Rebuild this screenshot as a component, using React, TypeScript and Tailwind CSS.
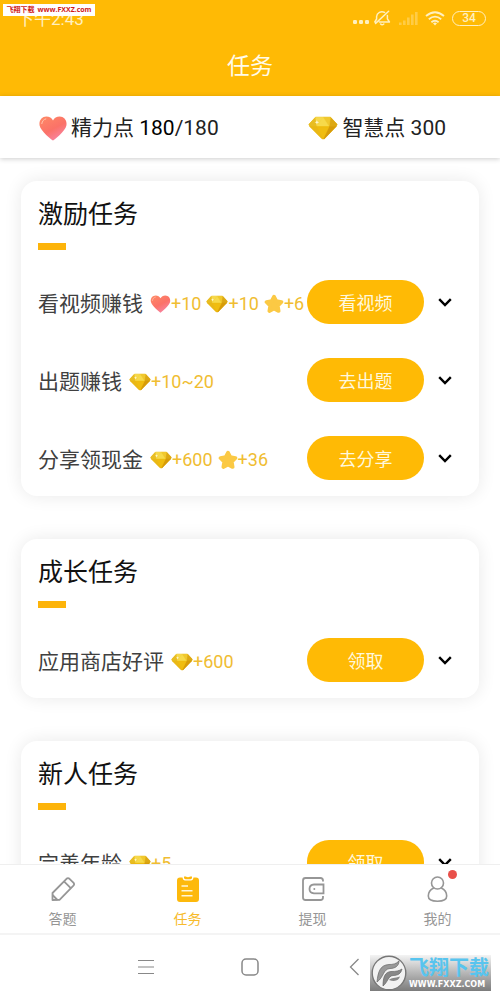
import { useState } from 'react';
import type { ReactNode } from 'react';

type RewardKind = 'heart' | 'gem' | 'star';

interface Task {
  name: string;
  action: string;
  rewards: { kind: RewardKind; amount: string }[];
}

interface TaskGroup {
  title: string;
  tasks: Task[];
}

const groups: TaskGroup[] = [
  {
    title: '激励任务',
    tasks: [
      {
        name: '看视频赚钱',
        action: '看视频',
        rewards: [
          { kind: 'heart', amount: '+10' },
          { kind: 'gem', amount: '+10' },
          { kind: 'star', amount: '+6' },
        ],
      },
      { name: '出题赚钱', action: '去出题', rewards: [{ kind: 'gem', amount: '+10~20' }] },
      {
        name: '分享领现金',
        action: '去分享',
        rewards: [
          { kind: 'gem', amount: '+600' },
          { kind: 'star', amount: '+36' },
        ],
      },
    ],
  },
  {
    title: '成长任务',
    tasks: [{ name: '应用商店好评', action: '领取', rewards: [{ kind: 'gem', amount: '+600' }] }],
  },
  {
    title: '新人任务',
    tasks: [{ name: '完善年龄', action: '领取', rewards: [{ kind: 'gem', amount: '+5' }] }],
  },
];

function HeartIcon({ className }: { className: string }) {
  return (
    <svg viewBox="0 0 28 25" className={className} aria-hidden="true">
      <defs>
        <linearGradient id="heart" x1="0" y1="0" x2="0.6" y2="1">
          <stop offset="0" stopColor="#ff8a66" />
          <stop offset="0.6" stopColor="#fb7268" />
          <stop offset="1" stopColor="#f884a0" />
        </linearGradient>
      </defs>
      <path
        d="M14 24.5 C12.8 24 1.5 15 .6 9.5 C-.3 4.5 3 .6 7.3 .6 C10.4 .6 12.8 2.2 14 4.4 C15.2 2.2 17.6 .6 20.7 .6 C25 .6 28.3 4.5 27.4 9.5 C26.5 15 15.2 24 14 24.5 Z"
        fill="url(#heart)"
      />
      <path d="M2.8 7.6 C3.2 5 4.8 3.2 6.8 2.9" fill="none" stroke="#ffc4ae" strokeWidth="1" strokeLinecap="round" />
    </svg>
  );
}

function GemIcon({ className }: { className: string }) {
  return (
    <svg viewBox="0 0 32 25" className={className} strokeWidth=".5" strokeLinejoin="round" aria-hidden="true">
      <path d="M8 1 L24 1 L31 8.5 L30 11 L17.5 24 L15 24 L2 11 L1 8.5 Z" fill="#ecba12" stroke="#ecba12" />
      <path d="M8 1 L1 8.5 L2 11 L9.5 11 Z" fill="#e8bd22" stroke="#e8bd22" />
      <path d="M8 1 L16 1 L9.5 11 Z" fill="#f6d84c" stroke="#f6d84c" />
      <path d="M24 1 L31 8.5 L30 11 L22.5 11 Z" fill="#dca814" stroke="#dca814" />
      <path d="M16 1 L24 1 L22.5 11 Z" fill="#f0c82e" stroke="#f0c82e" />
      <path d="M16 1 L9.5 11 L22.5 11 Z" fill="#f7da4a" stroke="#f7da4a" />
      <path d="M2 11 L9.5 11 L16.2 24 L15 24 Z" fill="#eab816" stroke="#eab816" />
      <path d="M22.5 11 L30 11 L17.5 24 L16.2 24 Z" fill="#d79c0a" stroke="#d79c0a" />
      <path d="M9.5 11 L22.5 11 L16.2 24 Z" fill="#f0bd10" stroke="#f0bd10" />
      <path d="M9.5 4 L10.1 5.8 L12 6.4 L10.1 7 L9.5 8.8 L8.9 7 L7 6.4 L8.9 5.8 Z" fill="#fffbe0" />
    </svg>
  );
}

function StarIcon({ className }: { className: string }) {
  return (
    <svg viewBox="0 0 24 24" className={className} aria-hidden="true">
      <path
        d="M12 3.2 L14.8 8.6 L21 9.6 L16.6 14 L17.6 20.4 L12 17.6 L6.4 20.4 L7.4 14 L3 9.6 L9.2 8.6 Z"
        fill="#fbc944"
        stroke="#fbc944"
        strokeWidth="4.4"
        strokeLinejoin="round"
      />
    </svg>
  );
}

function RewardIcon({ kind }: { kind: RewardKind }) {
  if (kind === 'heart') return <HeartIcon className="h-[18px] w-[21px] shrink-0" />;
  if (kind === 'gem') return <GemIcon className="h-[18px] w-[22px] shrink-0" />;
  return <StarIcon className="h-5 w-5 shrink-0" />;
}

function StatusBar() {
  return (
    <div className="flex h-9 items-center justify-between pr-[14px] pl-[17px] text-[#fff0c0]">
      <span className="pt-0.5 text-[17px] leading-9">下午2:43</span>
      <div className="flex items-center gap-[7px]">
        <svg viewBox="0 0 18 16" className="h-4 w-[18px]" fill="currentColor" aria-hidden="true">
          <rect x="1" y="10" width="4" height="4" rx="1.2" />
          <rect x="7" y="10" width="4" height="4" rx="1.2" />
          <rect x="13" y="10" width="4" height="4" rx="1.2" />
        </svg>
        <svg
          viewBox="0 0 18 16"
          className="-ml-1 h-4 w-[18px]"
          fill="none"
          stroke="currentColor"
          strokeWidth="1.5"
          strokeLinecap="round"
          strokeLinejoin="round"
          aria-hidden="true"
        >
          <path d="M3.6 9 V6.5 A5.4 5 0 0 1 11.6 2.4 M14.4 5.4 V8.8 L16.4 12 H6.4 M3.6 9 L1.8 12 M2.6 13.4 L15.6 1.2 M7.6 14 Q9 15.4 10.8 14" />
        </svg>
        <svg viewBox="0 0 20 15" className="h-[15px] w-5 opacity-35" fill="currentColor" aria-hidden="true">
          <rect x="1" y="11.5" width="2.6" height="2.5" />
          <rect x="5" y="9.5" width="2.6" height="4.5" />
          <rect x="9" y="6.5" width="2.6" height="7.5" />
          <rect x="13" y="3.5" width="2.6" height="10.5" />
          <rect x="17" y="1" width="2.6" height="13" />
        </svg>
        <svg viewBox="0 0 20 15" className="h-[15px] w-5" fill="none" stroke="currentColor" strokeWidth="1.8" aria-hidden="true">
          <path d="M1 5 Q10 -2.6 19 5" />
          <path d="M3.8 8.2 Q10 3 16.2 8.2" />
          <path d="M6.4 11.2 Q10 8.2 13.6 11.2" />
          <path d="M8 12.2 Q10 11 12 12.2 L10 14.4 Z" fill="currentColor" stroke="none" />
        </svg>
        <span className="flex h-[15px] w-[34px] items-center justify-center rounded-full border border-current text-xs leading-3 font-medium">
          34
        </span>
      </div>
    </div>
  );
}

function TaskRow({ task }: { task: Task }) {
  return (
    <li className="flex items-center">
      <div className="flex min-w-0 flex-1 items-center gap-[7px] pt-1 whitespace-nowrap">
        <span className="text-[21px] leading-8 text-[#404040]">{task.name}</span>
        <span className="flex items-center gap-[5px] text-lg leading-8 text-[#f0bd32]">
          {task.rewards.map((reward) => (
            <span key={reward.kind} className="flex items-center">
              <RewardIcon kind={reward.kind} />
              {reward.amount}
            </span>
          ))}
        </span>
      </div>
      <button type="button" className="h-11 w-[117px] shrink-0 rounded-full bg-[#ffba05] pt-1 text-lg leading-8 text-[#fff8dc]">
        {task.action}
      </button>
      <button type="button" aria-label={`展开${task.name}`} className="flex h-11 w-[41px] shrink-0 items-center justify-center">
        <svg viewBox="0 0 14 9" className="h-[9px] w-[14px]" fill="none" stroke="#000" strokeWidth="2.4" aria-hidden="true">
          <path d="M1.2 1.2 L7 7 L12.8 1.2" />
        </svg>
      </button>
    </li>
  );
}

function TaskCard({ group }: { group: TaskGroup }) {
  return (
    <section className="rounded-2xl bg-white pt-[18px] pr-[14px] pb-4 pl-[17px] shadow-[0_0_18px_rgba(0,0,0,0.09)]">
      <h2 className="text-[25px] leading-8 text-[#111]">{group.title}</h2>
      <div className="mt-3 h-[7px] w-7 bg-[#fdb40a]"></div>
      <ul className="mt-[30px] flex flex-col gap-[34px]">
        {group.tasks.map((task) => (
          <TaskRow key={task.name} task={task} />
        ))}
      </ul>
    </section>
  );
}

const tabs: { label: string; dot?: boolean; icon: ReactNode }[] = [
  {
    label: '答题',
    icon: (
      <svg viewBox="0 0 26 26" className="h-[26px] w-[26px]" fill="none" stroke="currentColor" strokeWidth="1.8" strokeLinejoin="round" aria-hidden="true">
        <path d="M2.5 24 L2.5 17 L16.5 2.8 Q18 1.5 19.5 2.8 L23.4 6.7 Q24.8 8.2 23.4 9.7 L9.5 23.8 Z" />
        <path d="M14 5.4 L20.8 12.2 M2.5 19 L7.5 24" />
      </svg>
    ),
  },
  {
    label: '任务',
    icon: (
      <svg viewBox="0 0 26 26" className="h-[26px] w-[26px]" fill="none" aria-hidden="true">
        <path d="M5 1.5 H7.5 Q8 4.5 10 4.5 H16 Q18 4.5 18.5 1.5 H21 Q24 1.5 24 4.5 V23 Q24 26 21 26 H5 Q2 26 2 23 V4.5 Q2 1.5 5 1.5 Z" fill="#fdb90c" />
        <path d="M9 .5 H10.8 Q13 2 15.2 .5 H17 V1.8 Q17 3.2 15.5 3.2 H10.5 Q9 3.2 9 1.8 Z" fill="#fdb90c" />
        <path d="M6.5 10 H13 M6.5 14.8 H17.5 M6.5 19.8 H17.5" stroke="#fff6d8" strokeWidth="1.5" />
      </svg>
    ),
  },
  {
    label: '提现',
    icon: (
      <svg viewBox="0 0 26 26" className="h-[26px] w-[26px]" fill="none" stroke="currentColor" strokeWidth="1.8" aria-hidden="true">
        <path d="M23 5.5 V4.5 Q23 2 20.5 2 H5.5 Q3 2 3 4.5 V21.5 Q3 24 5.5 24 H20.5 Q23 24 23 21.5 V20" />
        <path d="M23.5 8.5 H14 Q9.5 8.8 9.5 13 Q9.5 17 14 17.3 H23.5 Z" />
        <circle cx="14.3" cy="13" r="1" fill="currentColor" stroke="none" />
      </svg>
    ),
  },
  {
    label: '我的',
    dot: true,
    icon: (
      <svg viewBox="0 0 26 26" className="h-[26px] w-[26px]" fill="none" stroke="currentColor" strokeWidth="1.6" aria-hidden="true">
        <circle cx="12.5" cy="7" r="6" />
        <path d="M8.8 12 C5 13.8 3.3 17 3.3 20 C3.3 23.5 6 25.2 12.5 25.2 C19 25.2 21.7 23.5 21.7 20 C21.7 17 20 13.8 16.2 12" />
      </svg>
    ),
  },
];

function TabBar() {
  const [active, setActive] = useState('任务');

  return (
    <nav className="z-10 grid shrink-0 grid-cols-4 border-t border-[#efefef] bg-white pt-[11px] pb-1">
      {tabs.map((tab) => (
        <button
          key={tab.label}
          type="button"
          onClick={() => setActive(tab.label)}
          className={`flex flex-col items-center gap-[7px] text-sm leading-5 ${
            tab.label === active ? 'text-[#f7bb2c]' : 'text-[#969696]'
          }`}
        >
          <span className="relative">
            {tab.icon}
            {tab.dot && <span className="absolute -top-1.5 -right-1.5 h-[9px] w-[9px] rounded-full bg-[#e9504a]"></span>}
          </span>
          {tab.label}
        </button>
      ))}
    </nav>
  );
}

function SystemNav() {
  return (
    <div className="flex h-[67px] shrink-0 items-center justify-center gap-[84px] border-t-2 border-[#f4f4f4] bg-white pb-0.5 text-[#888]">
      <button type="button" aria-label="菜单">
        <svg viewBox="0 0 20 20" className="h-5 w-5" stroke="currentColor" strokeWidth="1.2" aria-hidden="true">
          <path d="M2 3.5 H18 M2 10 H18 M2 16.5 H18" />
        </svg>
      </button>
      <button type="button" aria-label="主页">
        <svg viewBox="0 0 20 20" className="h-5 w-5" fill="none" stroke="currentColor" strokeWidth="1.5" aria-hidden="true">
          <rect x="2" y="2" width="16" height="16" rx="4" />
        </svg>
      </button>
      <button type="button" aria-label="返回">
        <svg viewBox="0 0 20 20" className="h-5 w-5" fill="none" stroke="currentColor" strokeWidth="1.3" aria-hidden="true">
          <path d="M14.5 2 L6.5 10 L14.5 18" />
        </svg>
      </button>
    </div>
  );
}

function SiteBadge() {
  return (
    <div className="absolute right-[9px] bottom-[9px] z-20 flex h-9 w-[121px] items-center gap-0.5 bg-linear-to-b from-[#f4f4f4] to-[#7c7c7c] pl-px">
      <svg viewBox="0 0 36 36" className="h-9 w-9 shrink-0" aria-hidden="true">
        <circle cx="18" cy="18" r="16.8" fill="#f2f2f2" stroke="#777" strokeWidth="1.4" />
        <path d="M6 27 C7 17 9 10 18 9.5 C22 9.5 25 9 28 6 C28 11 24 13.5 19 13.5 C12 14 13 22 6 27 Z" fill="#999" stroke="#666" strokeWidth=".7" />
        <path d="M12 31 C12 22 14 17 20 16.5 C25 16.5 28 16 31 14 C30 18.5 27 20.5 22 20.5 C17 21 17 27 12 31 Z" fill="#888" stroke="#666" strokeWidth=".7" />
        <path d="M18 25 C20 22.5 24 23.5 29 21.5 C28 25.5 24 27 18 25 Z" fill="#888" />
      </svg>
      <div className="flex flex-col whitespace-nowrap">
        <span className="text-[20px] leading-[24px] font-bold text-[#58c4ee]">飞翔下载</span>
        <span className="font-['DejaVu_Sans'] text-[8px] leading-[10px] font-bold text-white">WWW.FXXZ.COM</span>
      </div>
    </div>
  );
}

export default function App() {
  return (
    <div className="relative flex h-screen flex-col overflow-hidden bg-white font-[Roboto,'Noto_Sans_CJK_SC',sans-serif]">
      <header className="shrink-0 bg-[#ffba05]">
        <StatusBar />
        <h1 className="pt-2 pb-1.5 text-center text-[23px] leading-[46px] text-[#fffbea]">任务</h1>
      </header>

      <div className="z-10 flex shrink-0 items-center justify-between bg-white pt-4 pr-[54px] pb-[14px] pl-[39px] text-[21px] leading-8 text-[#222] shadow-[0_1px_5px_rgba(0,0,0,0.2)]">
        <div className="flex items-center gap-1">
          <HeartIcon className="h-[25px] w-7" />
          <span>
            精力点 <span className="text-black">180</span>/180
          </span>
        </div>
        <div className="flex items-center gap-1">
          <GemIcon className="h-6 w-[30px]" />
          <span>智慧点 300</span>
        </div>
      </div>

      <main className="min-h-0 flex-1 overflow-hidden px-[21px] pt-[23px]">
        <div className="flex flex-col gap-[43px]">
          {groups.map((group) => (
            <TaskCard key={group.title} group={group} />
          ))}
        </div>
      </main>

      <TabBar />
      <SystemNav />

      <div className="absolute top-1 left-[3px] z-20 flex h-3 w-[92px] items-center justify-center gap-[3px] bg-white text-[7px] leading-3 font-bold whitespace-nowrap text-[#d01818]">
        <span>飞翔下载</span>
        <span className="font-['Open_Sans']">www.FXXZ.com</span>
      </div>
      <SiteBadge />
    </div>
  );
}
